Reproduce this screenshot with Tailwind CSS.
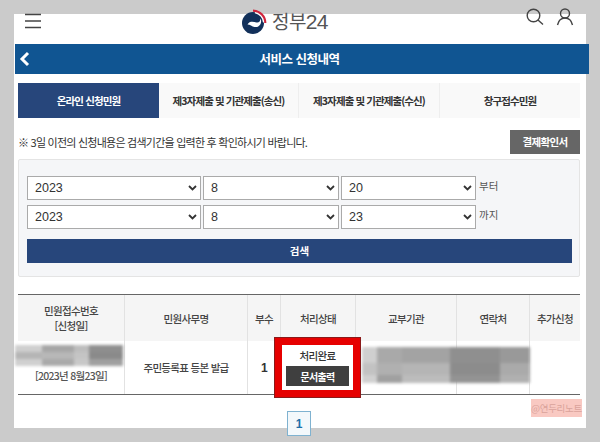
<!DOCTYPE html>
<html lang="ko">
<head>
<meta charset="utf-8">
<script src="https://cdn.jsdelivr.net/npm/@tailwindcss/browser@4"></script>
</head>
<body class="m-0 bg-[#cbcbcb]">
<div class="w-[600px] h-[442px] overflow-hidden pt-[14px] pl-[14px] font-['Noto_Sans_CJK_KR','Liberation_Sans',sans-serif] text-[#333]">
  <div class="relative w-[572px] h-[414px] bg-white">
    <!-- header -->
    <header class="relative h-[30px] flex items-start justify-between">
      <svg class="ml-[10px] mt-[-2px]" width="18" height="18" viewBox="0 0 18 18"><path d="M1 2.5H17M1 9H17M1 15.5H17" stroke="#444" stroke-width="1.6"/></svg>
      <div class="absolute left-[227px] top-[-6px] flex items-center gap-[5px]">
        <svg width="26" height="26" viewBox="0 0 26 26">
          <circle cx="12" cy="14" r="11" fill="#12305a"/>
          <path d="M14 3.200A11 11 0 0 1 23 13.500" fill="none" stroke="#fff" stroke-width="2"/>
          <path d="M12 1.700A12.300 12.300 0 0 1 24.300 14" fill="none" stroke="#d0243c" stroke-width="2.200"/>
          <path d="M6.500 15.500C8.500 11.500 13.500 13 15.500 13.500C18 14 19.500 12 19.500 9.500C21.500 13.500 18.500 19 13.500 18C11 17.500 9 15.500 6.500 15.500Z" fill="#fff"/>
        </svg>
        <span class="text-[19px] leading-[26px] text-[#555] tracking-[-0.6px]">정부<span class="font-['Liberation_Sans',sans-serif] text-[21px]">24</span></span>
      </div>
      <div class="flex gap-[12px] mt-[-6px] mr-[12px]">
        <svg width="18" height="18" viewBox="0 0 18 18" fill="none" stroke="#444" stroke-width="1.4"><circle cx="7.500" cy="7.500" r="6.300"/><path d="M12 12L17 16.500"/></svg>
        <svg width="18" height="18" viewBox="0 0 18 18" fill="none" stroke="#444" stroke-width="1.4"><circle cx="9" cy="5.500" r="4.500"/><path d="M1.500 17C2.500 12.500 5 10 9 10S15.500 12.500 16.500 17"/></svg>
      </div>
    </header>
    <!-- title bar -->
    <div class="relative h-[30px] w-[574px] ml-[1px] pr-[5px] bg-[#105592] flex items-center justify-center">
      <svg class="absolute left-[4px] top-[7px]" width="11" height="16" viewBox="0 0 11 16" fill="none" stroke="#fff" stroke-width="3"><path d="M9 2L3 8L9 14"/></svg>
      <span class="text-[12.5px] font-bold text-white tracking-[-0.5px]">서비스 신청내역</span>
    </div>
    <!-- tabs -->
    <div class="mt-[9px] ml-[4px] w-[562px] h-[35px] grid grid-cols-[141px_140px_141px_140px] bg-[#f9f9f9] text-[10.5px] font-bold tracking-[-0.9px] text-[#333]">
      <div class="bg-[#27467b] text-white flex items-center justify-center">온라인 신청민원</div>
      <div class="flex items-center justify-center border-r border-[#eee]">제3자제출 및 기관제출(송신)</div>
      <div class="flex items-center justify-center border-r border-[#eee]">제3자제출 및 기관제출(수신)</div>
      <div class="flex items-center justify-center">창구접수민원</div>
    </div>
    <!-- notice -->
    <div class="mt-[12px] ml-[4px] w-[562px] h-[24px] flex items-center justify-between">
      <span class="text-[11px] tracking-[-0.76px] text-[#333]">※ 3일 이전의 신청내용은 검색기간을 입력한 후 확인하시기 바랍니다.</span>
      <div class="w-[70px] h-[24px] bg-[#666] text-white text-[10.5px] font-bold tracking-[-0.7px] flex items-center justify-center">결제확인서</div>
    </div>
    <!-- search panel -->
    <div class="mt-[5px] ml-[4px] w-[562px] h-[118px] bg-[#f5f6f8] border border-[#e4e4e4] rounded-[2px] pt-[16px] pl-[8px]">
      <div class="flex flex-col gap-[5px]">
        <div class="flex gap-[2px] items-start h-[24px]">
          <div class="w-[174px] h-[24px] bg-white border border-[#aaa] flex items-center justify-between pl-[7px] pr-[3px] text-[12.5px] text-[#333] font-['Liberation_Sans',sans-serif]">2023<svg width="9" height="6" viewBox="0 0 9 6" fill="none" stroke="#333" stroke-width="1.8"><path d="M1 1L4.500 4.500L8 1"/></svg></div>
          <div class="w-[136px] h-[24px] bg-white border border-[#aaa] flex items-center justify-between pl-[7px] pr-[3px] text-[12.5px] text-[#333] font-['Liberation_Sans',sans-serif]">8<svg width="9" height="6" viewBox="0 0 9 6" fill="none" stroke="#333" stroke-width="1.8"><path d="M1 1L4.500 4.500L8 1"/></svg></div>
          <div class="w-[135px] h-[24px] bg-white border border-[#aaa] flex items-center justify-between pl-[7px] pr-[3px] text-[12.5px] text-[#333] font-['Liberation_Sans',sans-serif]">20<svg width="9" height="6" viewBox="0 0 9 6" fill="none" stroke="#333" stroke-width="1.8"><path d="M1 1L4.500 4.500L8 1"/></svg></div>
          <span class="ml-[1px] text-[10.5px] leading-[20px] text-[#555]">부터</span>
        </div>
        <div class="flex gap-[2px] items-start h-[24px]">
          <div class="w-[174px] h-[24px] bg-white border border-[#aaa] flex items-center justify-between pl-[7px] pr-[3px] text-[12.5px] text-[#333] font-['Liberation_Sans',sans-serif]">2023<svg width="9" height="6" viewBox="0 0 9 6" fill="none" stroke="#333" stroke-width="1.8"><path d="M1 1L4.500 4.500L8 1"/></svg></div>
          <div class="w-[136px] h-[24px] bg-white border border-[#aaa] flex items-center justify-between pl-[7px] pr-[3px] text-[12.5px] text-[#333] font-['Liberation_Sans',sans-serif]">8<svg width="9" height="6" viewBox="0 0 9 6" fill="none" stroke="#333" stroke-width="1.8"><path d="M1 1L4.500 4.500L8 1"/></svg></div>
          <div class="w-[135px] h-[24px] bg-white border border-[#aaa] flex items-center justify-between pl-[7px] pr-[3px] text-[12.5px] text-[#333] font-['Liberation_Sans',sans-serif]">23<svg width="9" height="6" viewBox="0 0 9 6" fill="none" stroke="#333" stroke-width="1.8"><path d="M1 1L4.500 4.500L8 1"/></svg></div>
          <span class="ml-[1px] text-[10.5px] leading-[20px] text-[#555]">까지</span>
        </div>
      </div>
      <div class="mt-[10px] w-[545px] h-[24px] bg-[#27467b] text-white text-[10.5px] font-bold flex items-center justify-center">검색</div>
    </div>
    <!-- table -->
    <div class="mt-[17px] ml-[4px] w-[562px] border-t border-b border-[#666]">
      <div class="grid grid-cols-[107px_123px_33px_75px_101px_73px_50px] h-[46px] bg-[#f5f5f5] text-[10.5px] font-medium tracking-[-0.7px] text-[#444] text-center leading-[15px]">
        <div class="flex items-center justify-center border-r border-[#e2e2e2]">민원접수번호<br>[신청일]</div>
        <div class="flex items-center justify-center border-r border-[#e2e2e2]">민원사무명</div>
        <div class="flex items-center justify-center border-r border-[#e2e2e2]">부수</div>
        <div class="flex items-center justify-center border-r border-[#e2e2e2]">처리상태</div>
        <div class="flex items-center justify-center border-r border-[#e2e2e2]">교부기관</div>
        <div class="flex items-center justify-center border-r border-[#e2e2e2]">연락처</div>
        <div class="flex items-center justify-center">추가신청</div>
      </div>
      <div class="grid grid-cols-[107px_123px_33px_75px_101px_73px_50px] h-[53px] text-[10.5px] tracking-[-0.7px] text-[#333] text-center">
        <div class="border-r border-[#e2e2e2] flex items-end justify-center pb-[10px]">
          <span class="font-medium text-[#555]">[2023년 8월23일]</span>
        </div>
        <div class="border-r border-[#e2e2e2] flex items-center justify-center font-medium text-[#444]">주민등록표 등본 발급</div>
        <div class="border-r border-[#e2e2e2] flex items-center justify-center font-bold text-[12px] font-['Liberation_Sans',sans-serif]">1</div>
        <div class="border-r border-[#e2e2e2]"></div>
        <div class="border-r border-[#e2e2e2]"></div>
        <div class="border-r border-[#e2e2e2]"></div>
        <div></div>
      </div>
    </div>
    <!-- blurred: receipt number -->
    <div class="absolute left-[1px] top-[331px] w-[108px] h-[21px] grid grid-cols-[27px_32px_15px_34px] grid-rows-[7px_7px_7px] blur-[1.5px] overflow-hidden">
      <div class="bg-[#cfcfcf]"></div><div class="bg-[#a6a6a6]"></div><div class="bg-[#bdbdbd]"></div><div class="bg-[#8f8f8f]"></div>
      <div class="bg-[#b5b5b5]"></div><div class="bg-[#b8b8b8]"></div><div class="bg-[#c4c4c4]"></div><div class="bg-[#8a8a8a]"></div>
      <div class="bg-[#d0d0d0]"></div><div class="bg-[#a9a9a9]"></div><div class="bg-[#c8c8c8]"></div><div class="bg-[#a0a0a0]"></div>
    </div>
    <!-- blurred: office and phone -->
    <div class="absolute left-[348px] top-[333px] w-[168px] h-[36px] grid grid-cols-[15px_25px_48px_50px_30px] grid-rows-[16px_12px_8px] blur-[1.5px] overflow-hidden">
      <div class="bg-[#cfcfcf]"></div><div class="bg-[#a9a9a9]"></div><div class="bg-[#a3a3a3]"></div><div class="bg-[#8f8f8f]"></div><div class="bg-[#999]"></div>
      <div class="bg-[#c2c2c2]"></div><div class="bg-[#b0b0b0]"></div><div class="bg-[#b5b5b5]"></div><div class="bg-[#8c8c8c]"></div><div class="bg-[#aaa]"></div>
      <div class="bg-[#d0d0d0]"></div><div class="bg-[#a0a0a0]"></div><div class="bg-[#bcbcbc]"></div><div class="bg-[#939393]"></div><div class="bg-[#b0b0b0]"></div>
    </div>
    <!-- red highlight -->
    <div class="absolute left-[261px] top-[324px] w-[85px] h-[59px] border-[7px] border-[#e60000] outline outline-1 outline-[#8a1a1a] bg-white flex flex-col items-center pt-[2px]">
      <span class="text-[10.5px] font-medium tracking-[-0.7px] text-[#333] leading-[18px]">처리완료</span>
      <div class="mt-[1px] w-[63px] h-[20px] bg-[#3f3f3f] text-white text-[10px] font-bold tracking-[-0.7px] flex items-center justify-center">문서출력</div>
    </div>
    <!-- watermark -->
    <div class="absolute left-[517px] top-[385px] w-[51px] h-[18px] bg-[#f9c9c2] text-[#d9a39b] text-[9.5px] tracking-[-0.3px] flex items-center justify-center whitespace-nowrap">@연두리노트</div>
    <!-- pagination -->
    <div class="absolute left-[273px] top-[397px] w-[24px] h-[25px] bg-[#f3f8fb] border border-[#7fb2d0] flex items-center justify-center text-[12px] font-bold text-[#1d6fa8] font-['Liberation_Sans',sans-serif]">1</div>
  </div>
</div>
</body>
</html>
